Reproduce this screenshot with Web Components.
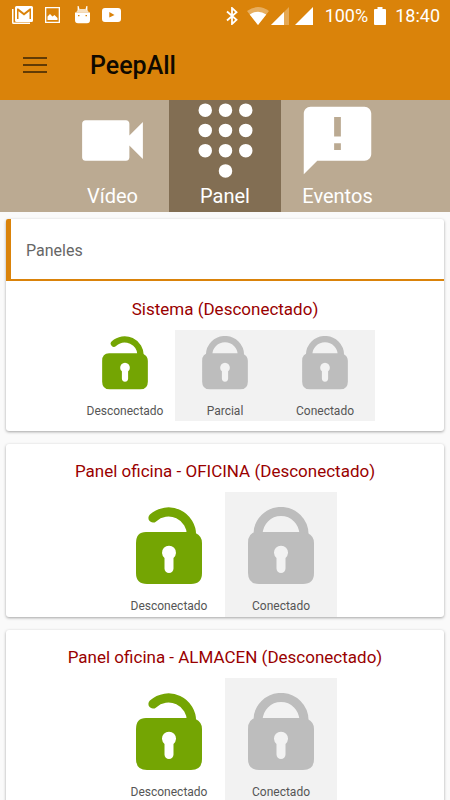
<!DOCTYPE html>
<html lang="es">
<head>
<meta charset="utf-8">
<meta name="viewport" content="width=device-width, initial-scale=1">
<title>PeepAll</title>
<style>
  html { background: #fafafa; }
  body { margin: 0; font-family: Roboto, "Noto Sans", sans-serif; color: #555; --brand: #da830a; }
  main { display: flex; flex-direction: column; gap: 13px; padding: 7px 6px 12px; }
</style>
</head>
<body>
<status-bar></status-bar>
<app-bar>PeepAll</app-bar>
<tab-strip>
  <tab-item icon="video">Vídeo</tab-item>
  <tab-item icon="pad" selected>Panel</tab-item>
  <tab-item icon="event">Eventos</tab-item>
</tab-strip>
<main>
  <panel-card>
    <card-header slot="header">Paneles</card-header>
    <span slot="title">Sistema (Desconectado)</span>
    <lock-option small active>Desconectado</lock-option>
    <lock-option small>Parcial</lock-option>
    <lock-option small>Conectado</lock-option>
  </panel-card>
  <panel-card>
    <span slot="title">Panel oficina - OFICINA (Desconectado)</span>
    <lock-option active>Desconectado</lock-option>
    <lock-option>Conectado</lock-option>
  </panel-card>
  <panel-card>
    <span slot="title">Panel oficina - ALMACEN (Desconectado)</span>
    <lock-option active>Desconectado</lock-option>
    <lock-option>Conectado</lock-option>
  </panel-card>
</main>
<script>
const define = (name, render) => customElements.define(name, class extends HTMLElement {
  connectedCallback() {
    if (this.shadowRoot) return;
    this.attachShadow({ mode: 'open' }).innerHTML = render(this);
  }
});

define('status-bar', () => `
<style>
  :host { display: flex; justify-content: space-between; align-items: center; height: 30px; padding: 0 10px 0 12px; background: var(--brand); color: #fff; font-size: 18px; line-height: 30px; }
  div { display: flex; align-items: center; }
  svg { display: block; fill: #fff; }
  .left { gap: 12px; }
  .left svg:nth-child(2) { margin-right: 3px; }
  .right { gap: 6px; padding-top: 1px; }
  .wifi { margin-left: 3px; margin-right: -4px; }
  .level { margin-left: 6px; }
  .time { margin-left: 3px; }
</style>
<div class="left">
  <svg width="21" height="18" viewBox="0 0 21 18"><path d="M0 3h1.500v13.500H18V18H1.500Q0 18 0 16.500z"/><path fill-rule="evenodd" d="M4.500 0h15Q21 0 21 1.500v13Q21 16 19.500 16h-15Q3 16 3 14.500v-13Q3 0 4.500 0zM5 2.500V13h1.500V5.200l5.500 4.300 5.500-4.300V13H19V2.500h-1.300L12 7 6.300 2.500z"/></svg>
  <svg width="15" height="16" viewBox="0 0 15 16"><path fill-rule="evenodd" d="M0 0h15v16H0zM1.300 1.300v13.400h12.400V1.300z"/><path d="M2.500 13V9.500L5 7l2.500 2.500L9.500 8l3 3v2z"/></svg>
  <svg width="15" height="18" viewBox="0 0 15 18"><path fill-rule="evenodd" d="M0 6.500h15V14q0 3.300-3 3.300H3Q0 17.300 0 14zM3 9v1.300h1.500V9zm7.500 0v1.300H12V9z"/><path opacity=".75" d="M1 6.500q1-3 4-3.500h5q3 .5 4 3.500z"/><path d="M2.600 0h1l1 3.500-2 1zM12.400 0h-1l-1 3.500 2 1z"/></svg>
  <svg width="19" height="14" viewBox="0 0 19 14"><path fill-rule="evenodd" d="M3 0h13q3 0 3 3v8q0 3-3 3H3q-3 0-3-3V3q0-3 3-3zM7.300 4v5.600L12.500 7z"/></svg>
</div>
<div class="right">
  <svg width="12" height="18" viewBox="0 0 12 18"><path d="M1 4.500l9.500 8.300L6 17V1l4.500 4.200L1 13.500" fill="none" stroke="#fff" stroke-width="1.800"/></svg>
  <svg class="wifi" width="22" height="18" viewBox="0 0 22 18"><path opacity=".35" d="M11 18L0 4Q11-4 22 4z"/><path d="M11 18L2.700 7.400Q11 2 19.300 7.400z"/></svg>
  <svg width="18" height="18" viewBox="0 0 18 18"><path opacity=".3" d="M0 18L18 0v18z"/><path d="M0 18L13 5v13z"/></svg>
  <svg width="18" height="18" viewBox="0 0 18 18"><path d="M0 18L18 0v18z"/></svg>
  <span class="level">100%</span>
  <svg width="12" height="18" viewBox="0 0 12 18"><path d="M3.500 0h5v2H11q1 0 1 1v14q0 1-1 1H1q-1 0-1-1V3q0-1 1-1h2.500z"/></svg>
  <span class="time">18:40</span>
</div>`);

define('app-bar', () => `
<style>
  :host { display: flex; align-items: center; gap: 43px; height: 70px; padding: 0 23px; background: var(--brand); color: #0f0900; }
  button { border: 0; background: none; padding: 0; }
  svg { display: block; fill: #613b05; }
  h1 { margin: 0; padding-top: 2px; font-size: 25px; line-height: 32px; font-weight: 500; }
</style>
<button aria-label="Menú"><svg width="24" height="16" viewBox="0 0 24 16"><path d="M0 0h24v2H0zM0 7h24v2H0zM0 14h24v2H0z"/></svg></button>
<h1><slot></slot></h1>`);

define('tab-strip', () => `
<style>
  :host { display: grid; grid-template-columns: repeat(3, 25%); justify-content: center; background: #bbaa92; }
</style>
<slot></slot>`);

const tabIcons = {
  video: 'M17 10.500V7c0-.55-.45-1-1-1H4c-.55 0-1 .45-1 1v10c0 .55.45 1 1 1h12c.55 0 1-.45 1-1v-3.500l4 4v-11l-4 4z',
  pad: [[6,3],[12,3],[18,3],[6,9],[12,9],[18,9],[6,15],[12,15],[18,15],[12,21]].map(([x, y]) => `M${x - 2} ${y}a2 2 0 1 1 4 0a2 2 0 1 1-4 0z`).join(''),
  event: 'M20 2H4c-1.100 0-1.990.9-1.990 2L2 22l4-4h14c1.100 0 2-.9 2-2V4c0-1.100-.9-2-2-2zm-7 12.800h-2v-2h2v2zm0-4h-2V5h2v5.800z'
};
define('tab-item', el => `
<style>
  :host { display: block; }
  :host([selected]) { background: #826e53; }
  button { display: flex; flex-direction: column; align-items: center; width: 100%; border: 0; padding: 0; background: none; color: #fff; font: 20px/31px Roboto, "Noto Sans", sans-serif; }
  svg { display: block; fill: #fff; }
</style>
<button><svg width="81" height="81" viewBox="0 0 24 24"><path d="${tabIcons[el.getAttribute('icon')]}"/></svg><slot></slot></button>`);

define('card-header', () => `
<style>
  :host { display: block; margin-bottom: 1px; padding: 20px 15px 16px; border-left: 5px solid var(--brand); border-bottom: 2px solid var(--brand); font-size: 16px; line-height: 24px; color: #666; border-top-left-radius: 2px; }
</style>
<slot></slot>`);

define('panel-card', () => `
<style>
  :host { display: flow-root; background: #fff; border-radius: 3px; box-shadow: 0 1px 3px rgba(0,0,0,.35); }
  h2 { margin: 0; padding: 15px 0 9px; text-align: center; font-size: 17px; line-height: 24px; font-weight: 400; color: #990000; }
  .options { display: flex; justify-content: center; }
</style>
<slot name="header"></slot>
<h2><slot name="title"></slot></h2>
<div class="options"><slot></slot></div>`);

define('lock-option', el => {
  const on = el.hasAttribute('active');
  const shackle = on ? 'M17 11A23 23 0 0 1 55.500 29' : 'M10 29V27.500a23 23 0 0 1 46 0V29';
  return `
<style>
  :host { display: block; width: 112px; }
  :host([small]) { width: 100px; margin-bottom: 10px; }
  button { display: flex; flex-direction: column; align-items: center; gap: 11px; width: 100%; border: 0; padding: 15px 0 1px; background: #f2f2f2; color: #555; font: 12px/20px Roboto, "Noto Sans", sans-serif; }
  :host([small]) button { padding: 6px 0 0; }
  :host([active]) button { background: none; }
  svg { display: block; width: 66px; height: 78px; color: #bdbdbd; }
  :host([small]) svg { width: 46px; height: 54px; }
  :host([active]) svg { color: #74a503; }
</style>
<button aria-pressed="${on}"><svg viewBox="0 0 66 78">
  <path d="${shackle}" fill="none" stroke="currentColor" stroke-width="9.200" stroke-linecap="round"/>
  <path fill="currentColor" fill-rule="evenodd" d="M10 25H56Q57.500 25 59.500 26Q66 29 66 36V66Q66 77 55 77H11Q0 77 0 66V36Q0 25 10 25zM28.500 51V61.500a4.500 4.500 0 0 0 9 0V51A7 7 0 1 0 28.500 51z"/>
</svg><slot></slot></button>`;
});
</script>
</body>
</html>
